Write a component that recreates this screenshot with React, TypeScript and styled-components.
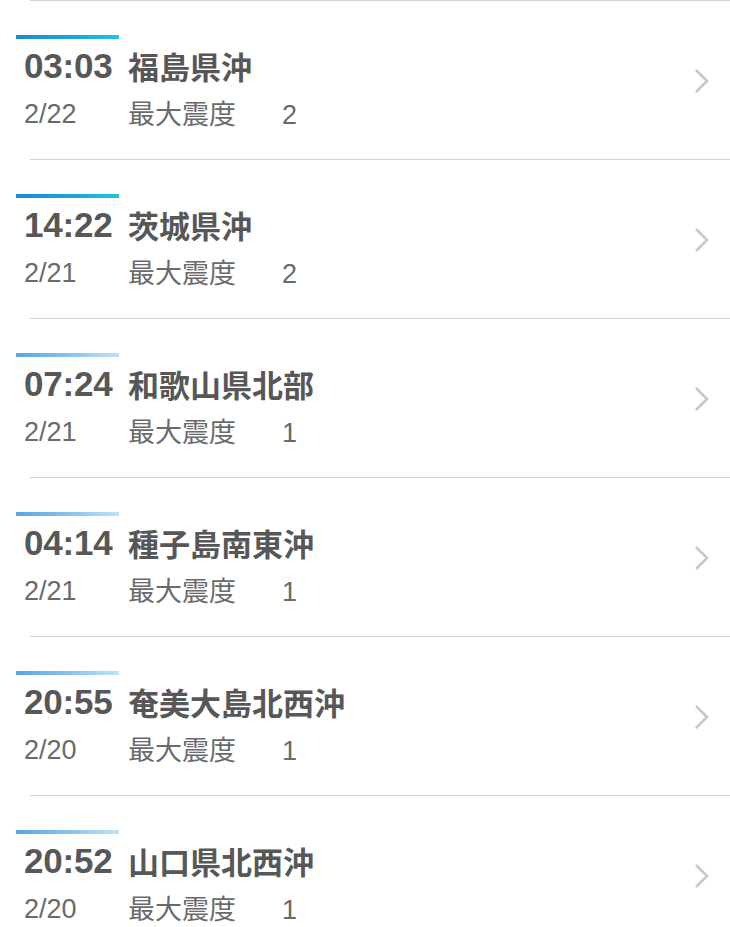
import React from "react";
import styled, { createGlobalStyle } from "styled-components";

const Global = createGlobalStyle`
  html, body { margin: 0; padding: 0; background: #ffffff; }
  body { font-family: "Liberation Sans", "Noto Sans CJK JP", sans-serif; }
`;

type Quake = { time: string; date: string; place: string; level: number };

const quakes: Quake[] = [
  { time: "03:03", date: "2/22", place: "福島県沖", level: 2 },
  { time: "14:22", date: "2/21", place: "茨城県沖", level: 2 },
  { time: "07:24", date: "2/21", place: "和歌山県北部", level: 1 },
  { time: "04:14", date: "2/21", place: "種子島南東沖", level: 1 },
  { time: "20:55", date: "2/20", place: "奄美大島北西沖", level: 1 },
  { time: "20:52", date: "2/20", place: "山口県北西沖", level: 1 },
];

const List = styled.ul`
  list-style: none;
  margin: 0;
  padding: 0;
  border-top: 1px solid #d4d4d4;
  margin-left: 30px;
`;

const Row = styled.li`
  position: relative;
  height: 158px;
  margin-left: -30px;
  padding: 34px 0 0 16px;
  box-sizing: border-box;
  display: flex;
  flex-direction: column;
  &::after {
    content: "";
    position: absolute;
    left: 30px;
    right: 0;
    bottom: -1px;
    height: 1px;
    background: #d4d4d4;
  }
  & + & {
    margin-top: 1px;
  }
`;

const Bar = styled.div<{ $level: number }>`
  width: 103px;
  height: 4px;
  background: ${(p) =>
    p.$level >= 2
      ? "linear-gradient(90deg, #1a8ccf 0%, #19a6da 55%, #1ec3e6 100%)"
      : "linear-gradient(90deg, #5aa6e0 0%, #8cc4ec 55%, #bfe3f7 100%)"};
`;

const Content = styled.div`
  display: grid;
  grid-template-columns: 104px 1fr;
  padding-left: 8px;
  padding-right: 20px;
  align-items: center;
  color: #575757;
`;

const Time = styled.div`
  font-family: "Liberation Sans", sans-serif;
  font-weight: 700;
  font-size: 35px;
  line-height: 46px;
  margin-top: 4px;
  letter-spacing: -0.2px;
`;

const Place = styled.div`
  font-family: "Noto Sans CJK JP", sans-serif;
  font-weight: 700;
  font-size: 31px;
  line-height: 46px;
  margin-top: 4px;
`;

const DateText = styled.div`
  font-family: "Liberation Sans", sans-serif;
  font-size: 27px;
  line-height: 40px;
  margin-top: 4px;
  color: #6a6a6a;
`;

const Label = styled.div`
  display: flex;
  align-items: baseline;
  font-family: "Noto Sans CJK JP", sans-serif;
  font-size: 27px;
  line-height: 40px;
  margin-top: 4px;
  color: #6a6a6a;
`;

const Level = styled.span`
  font-family: "Liberation Sans", sans-serif;
  font-size: 27px;
  margin-left: 46px;
`;

const Chevron = styled.svg`
  position: absolute;
  right: 19px;
  top: 67px;
  width: 18px;
  height: 26px;
`;

export default function App() {
  return (
    <>
      <Global />
      <List>
        {quakes.map((q, i) => (
          <Row key={i}>
            <Bar $level={q.level} />
            <Content>
              <Time>{q.time}</Time>
              <Place>{q.place}</Place>
              <DateText>{q.date}</DateText>
              <Label>
                最大震度<Level>{q.level}</Level>
              </Label>
            </Content>
            <Chevron viewBox="0 0 18 26">
              <path d="M3 2 L14 13 L3 24" fill="none" stroke="#c8c8cc" strokeWidth="2.6" />
            </Chevron>
          </Row>
        ))}
      </List>
    </>
  );
}
